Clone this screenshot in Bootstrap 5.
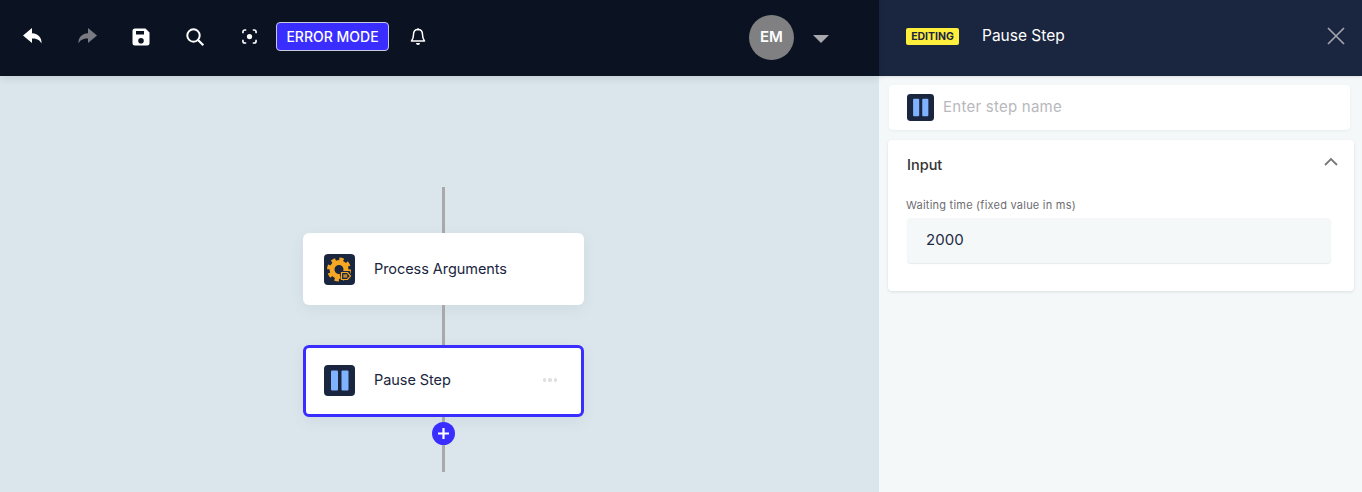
<!DOCTYPE html>
<html lang="en">
<head>
<meta charset="utf-8">
<title>Pause Step</title>
<link rel="stylesheet" href="https://cdn.jsdelivr.net/npm/bootstrap@5.3.0/dist/css/bootstrap.min.css">
<style>
html,body{height:492px;overflow:hidden;}
body{font-family:Inter,"Noto Sans",sans-serif;background:#dbe6ec;color:#1a2540;}
.shell{height:492px;}
.main-side{width:879px;}
.edit-side{width:483px;background:#f4f8f9;}
.tool-bar{height:76px;background:#0b1322;box-shadow:0 2px 8px rgba(11,19,34,.12);position:relative;padding-left:6px;}
.tool-btn{width:54px;height:76px;background:none;border:0;padding:0 0 6px;}
.err-mode{background:#3a2dff;color:#fff;border:1px solid #c9cbe0;border-radius:4px;font-size:14px;line-height:20px;height:29px;width:113px;padding:0;font-weight:500;margin:0 2px 3px 0;}
.user-chip{width:45px;height:45px;background:#808083;color:#fff;font-weight:600;font-size:15px;margin-left:304px;margin-bottom:1px;}
.caret-down{width:0;height:0;border-left:8px solid transparent;border-right:8px solid transparent;border-top:8px solid #a9a9ad;margin:1px 0 0 19px;}
.flow-area{padding:111px 0 0 8px;}
.wire{width:3px;background:#a9a9ad;}
.wire-a{height:46px;}
.wire-b{height:40px;}
.wire-c{height:55px;position:relative;}
.step-box{width:281px;height:72px;background:#fff;border-radius:6px;box-shadow:0 4px 14px rgba(60,80,100,.08);padding-left:21px;font-size:14.5px;letter-spacing:-.06px;}
.step-box.is-picked{border:3px solid #3a2dff;padding:0 0 2px 18px;}
.step-ico{width:31px;height:31px;flex:none;display:block;}
.step-label{margin-left:19px;}
.more-dots{margin-left:auto;margin-right:24px;display:flex;gap:2px;}
.more-dots i{width:3.5px;height:3.5px;background:#dfdfe1;border-radius:50%;display:block;}
.add-step{position:absolute;left:-10px;top:5px;width:23px;height:23px;background:#3a2dff;}
.edit-head{height:76px;background:#1a2540;color:#fff;padding:0 16px 4px 27px;box-shadow:0 1px 3px rgba(0,0,0,.1);}
.edit-tag{background:#ffef3d;color:#1a2540;font-size:10.5px;line-height:13px;font-weight:700;padding:2px 3px;border-radius:2px;width:53px;text-align:center;}
.edit-title{margin-left:23px;font-size:15.5px;}
.close-x{margin-left:auto;background:none;border:0;padding:0;line-height:0;}
.edit-body{padding:9px 12px 0 9px;}
.name-box{height:45px;background:#fff;border-radius:4px;box-shadow:0 1px 3px rgba(60,80,100,.07);padding-left:18px;margin:0 0 10px 1px;}
.name-box .step-ico{width:27px;height:27px;}
.name-field{border:0;outline:0;background:none;margin-left:9px;font-size:15px;flex:1;padding:0;color:#1a2540;letter-spacing:.25px;}
.name-field::placeholder{color:#b8b8bd;opacity:1;}
.input-panel{width:466px;height:151px;background:#fff;border-radius:4px;box-shadow:0 1px 3px rgba(60,80,100,.14);padding:0 18px 0 19px;}
.panel-top{height:50px;font-weight:500;font-size:14.5px;color:#333;}
.chev-up{margin-left:auto;margin-right:-2px;margin-top:-8px;}
.field-cap{font-size:11px;line-height:14px;color:#6d6d72;margin:8px 0 6px -1px;letter-spacing:.23px;}
.num-field{display:block;width:424px;height:45px;border:0;outline:0;background:#f4f8f9;border-radius:4px;box-shadow:0 1px 1px rgba(60,80,100,.12);padding:0 19px 2px;font-size:15px;color:#1f2a44;letter-spacing:.1px;}
</style>
</head>
<body>
<div class="shell d-flex">
  <div class="main-side d-flex flex-column">
    <div class="tool-bar d-flex align-items-center">
      <button class="tool-btn" aria-label="Undo"><svg width="22" height="22" viewBox="0 0 22 22"><path fill="#fff" d="M10 3 1 10.500 10 18v-4.600c4.800-.1 7.600 1.300 9.500 5.100.4-5.700-2.900-9.900-9.500-10.300z"/></svg></button>
      <button class="tool-btn" aria-label="Redo"><svg width="22" height="22" viewBox="0 0 22 22"><path fill="#7a7b82" d="M12 3l9 7.500-9 7.500v-4.600c-4.800-.1-7.600 1.300-9.500 5.100-.4-5.700 2.900-9.900 9.500-10.300z"/></svg></button>
      <button class="tool-btn" aria-label="Save"><svg width="18" height="18" viewBox="0 0 18 18"><path fill="#fff" fill-rule="evenodd" d="M3 .5h10.500L17.500 4.500V15a2.500 2.500 0 0 1-2.500 2.500H3A2.500 2.500 0 0 1 .5 15V3A2.500 2.500 0 0 1 3 .5zM4 3v3.500h8V3zm5 7a2.800 2.800 0 1 0 0 5.600A2.800 2.800 0 0 0 9 10z"/></svg></button>
      <button class="tool-btn" aria-label="Search"><svg width="20" height="20" viewBox="0 0 20 20"><circle cx="8.500" cy="8.500" r="6.200" fill="none" stroke="#fff" stroke-width="2"/><path d="M13 13l5.300 5.300" stroke="#fff" stroke-width="2.200" fill="none"/></svg></button>
      <button class="tool-btn" aria-label="Focus"><svg width="15" height="15" viewBox="0 0 16 16"><circle cx="8" cy="8" r="2.800" fill="#fff"/><path d="M1 4.500V3a2 2 0 0 1 2-2h1.500M11.500 1H13a2 2 0 0 1 2 2v1.500M15 11.500V13a2 2 0 0 1-2 2h-1.500M4.500 15H3a2 2 0 0 1-2-2v-1.500" fill="none" stroke="#fff" stroke-width="1.700"/></svg></button>
      <button class="err-mode">ERROR MODE</button>
      <button class="tool-btn" aria-label="Notifications"><svg width="16" height="18" viewBox="0 0 16 18"><path d="M8 1.500c-3 0-4.500 2.300-4.500 5 0 3.500-.8 5-2 6.500h13c-1.200-1.500-2-3-2-6.500 0-2.700-1.500-5-4.500-5z" fill="none" stroke="#fff" stroke-width="1.500" stroke-linejoin="round"/><path d="M6 15h4a2 2 0 0 1-4 0z" fill="#fff"/><circle cx="8" cy="1.300" r="1.100" fill="#fff"/></svg></button>
      <div class="user-chip rounded-circle d-flex align-items-center justify-content-center">EM</div>
      <div class="caret-down"></div>
    </div>
    <div class="flow-area d-flex flex-column align-items-center flex-grow-1">
      <div class="wire wire-a"></div>
      <div class="step-box d-flex align-items-center">
        <svg class="step-ico" viewBox="0 0 31 31"><rect width="31" height="31" rx="4" fill="#1a2540"/><circle cx="15" cy="15.500" r="7" fill="none" stroke="#f5a623" stroke-width="5"/><circle cx="15" cy="15.500" r="10.300" fill="none" stroke="#f5a623" stroke-width="3.400" stroke-dasharray="4.300 3.790"/><path d="M15 17l2 9h9V17z" fill="#1a2540"/><path fill="#1a2540" stroke="#f5a623" stroke-width="1.200" d="M17.500 18.500h6l3 3.500-3 3.500h-6z"/><rect x="19.300" y="20.300" width="4" height="3.400" fill="#f5a623" opacity=".75"/></svg>
        <span class="step-label">Process Arguments</span>
      </div>
      <div class="wire wire-b"></div>
      <div class="step-box is-picked d-flex align-items-center">
        <svg class="step-ico" viewBox="0 0 31 31"><rect width="31" height="31" rx="4" fill="#1a2540"/><rect x="7" y="5.500" width="7" height="20" rx="1" fill="#7fb2ff"/><rect x="17.500" y="5.500" width="7" height="20" rx="1" fill="#7fb2ff"/></svg>
        <span class="step-label">Pause Step</span>
        <span class="more-dots"><i></i><i></i><i></i></span>
      </div>
      <div class="wire wire-c">
        <div class="add-step rounded-circle d-flex align-items-center justify-content-center"><svg width="13" height="13" viewBox="0 0 13 13"><path d="M6.500 1v11M1 6.500h11" stroke="#fff" stroke-width="2.200"/></svg></div>
      </div>
    </div>
  </div>
  <div class="edit-side d-flex flex-column">
    <div class="edit-head d-flex align-items-center">
      <span class="edit-tag">EDITING</span>
      <span class="edit-title">Pause Step</span>
      <button class="close-x" aria-label="Close"><svg width="20" height="20" viewBox="0 0 20 20"><path d="M2 2l16 16M18 2L2 18" stroke="#a3a5ad" stroke-width="1.700"/></svg></button>
    </div>
    <div class="edit-body">
      <div class="name-box d-flex align-items-center">
        <svg class="step-ico" viewBox="0 0 31 31"><rect width="31" height="31" rx="4" fill="#1a2540"/><rect x="7" y="5.500" width="7" height="20" rx="1" fill="#7fb2ff"/><rect x="17.500" y="5.500" width="7" height="20" rx="1" fill="#7fb2ff"/></svg>
        <input class="name-field" type="text" placeholder="Enter step name">
      </div>
      <div class="input-panel">
        <div class="panel-top d-flex align-items-center"><span>Input</span><svg class="chev-up" width="14" height="9" viewBox="0 0 14 9"><path d="M1 8l6-6 6 6" fill="none" stroke="#777" stroke-width="1.800"/></svg></div>
        <div class="field-cap">Waiting time (fixed value in ms)</div>
        <input class="num-field" type="text" value="2000">
      </div>
    </div>
  </div>
</div>
<script src="https://cdn.jsdelivr.net/npm/bootstrap@5.3.0/dist/js/bootstrap.bundle.min.js"></script>
</body>
</html>
